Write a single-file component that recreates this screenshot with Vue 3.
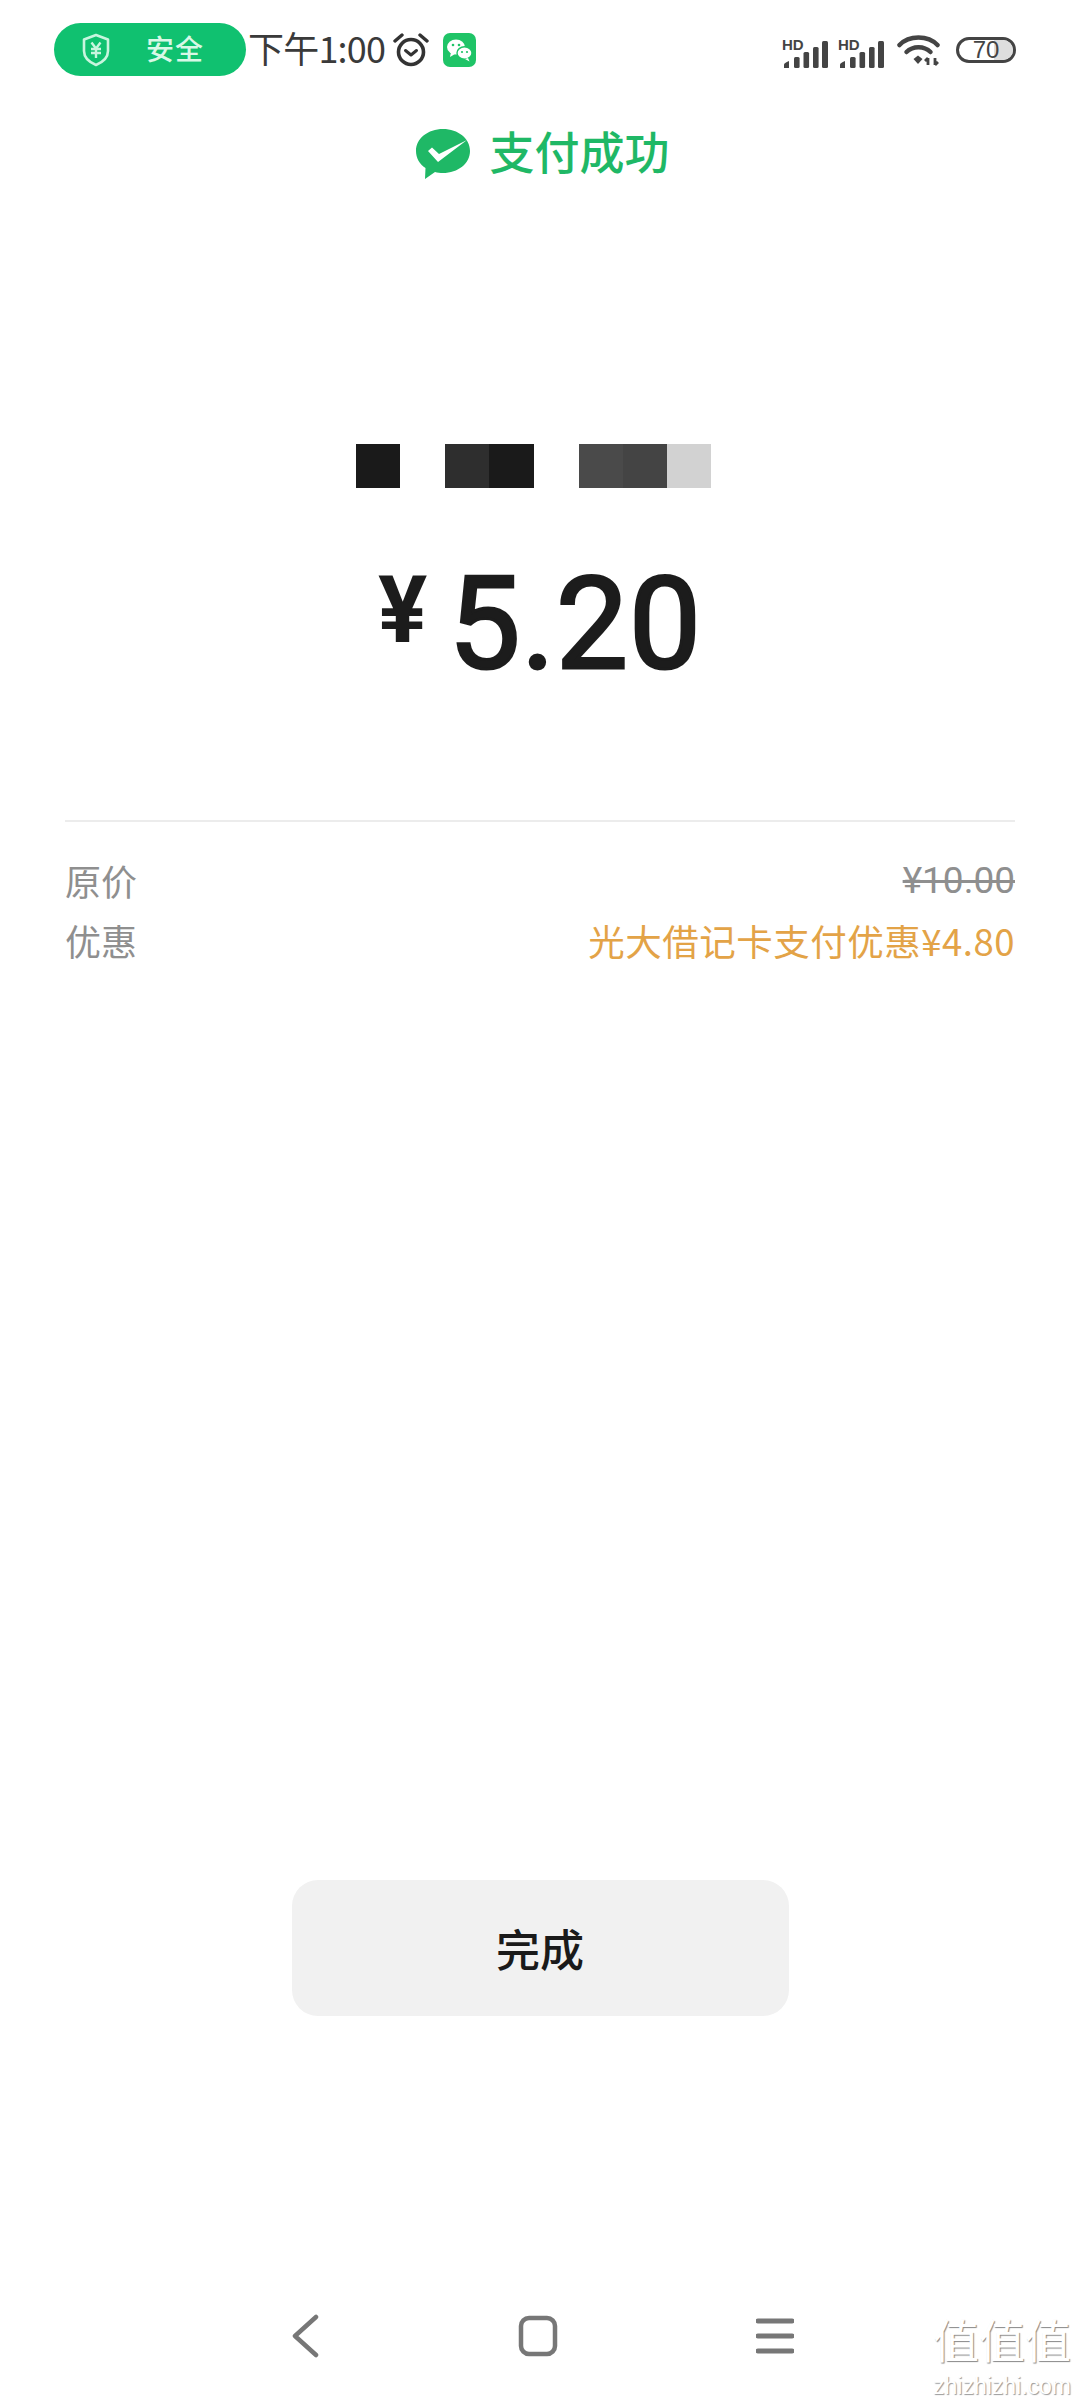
<template>
	<div class="page">
		<div class="status-bar">
			<div class="safe-pill">
				<svg class="shield" width="30" height="34" viewBox="0 0 30 34">
					<path d="M15 2 L27 6.5 V18 C27 25 21 29.5 15 32 C9 29.5 3 25 3 18 V6.5 Z" fill="none" stroke="#c8f5de" stroke-width="2.6" stroke-linejoin="round" />
					<path d="M10.5 9.5 L15 15.5 L19.5 9.5 M10 16 H20 M10 20 H20 M15 15.5 V25" fill="none" stroke="#c8f5de" stroke-width="2.4" />
				</svg>
				<span class="safe-text">安全</span>
			</div>
			<span class="time">下午1:00</span>
			<svg class="alarm" width="36" height="36" viewBox="0 0 36 36">
				<circle cx="18" cy="20" r="12.5" fill="none" stroke="#333" stroke-width="3.6" />
				<path d="M12.5 18.5 L18 23 L23.5 18.5" fill="none" stroke="#333" stroke-width="3" stroke-linecap="round" stroke-linejoin="round" />
				<path d="M2 9 L9 3 M34 9 L27 3" fill="none" stroke="#333" stroke-width="3.4" stroke-linecap="round" />
			</svg>
			<svg class="wechat" width="33" height="34" viewBox="0 0 33 34">
				<rect width="33" height="34" rx="7" fill="#1fc467" />
				<ellipse cx="13" cy="14" rx="9" ry="7.5" fill="#fff" />
				<path d="M8 19 L7 24 L12 21 Z" fill="#fff" />
				<ellipse cx="21.5" cy="20" rx="7.5" ry="6.2" stroke="#1fc467" stroke-width="1.4" fill="#fff" />
				<path d="M25 25 L26.5 28.5 L22 26 Z" fill="#fff" />
				<circle cx="10" cy="12" r="1.3" fill="#1fc467" />
				<circle cx="16" cy="12" r="1.3" fill="#1fc467" />
				<circle cx="19" cy="19" r="1.1" fill="#1fc467" />
				<circle cx="24" cy="19" r="1.1" fill="#1fc467" />
			</svg>

			<div class="status-right">
				<svg v-for="n in 2" :key="n" class="signal" width="46" height="40" viewBox="0 -8 46 40">
					<text x="0" y="12" class="hd">HD</text>
					<path d="M2 30 V26.5 Q2 25 7 23 V30 Z" fill="#444" />
					<rect x="12" y="19" width="5.6" height="11" rx="1.5" fill="#444" />
					<rect x="21.5" y="14" width="5.6" height="16" rx="1.5" fill="#444" />
					<rect x="31" y="9" width="5.6" height="21" rx="1.5" fill="#444" />
					<rect x="40" y="3" width="6" height="27" rx="1.5" fill="#444" />
				</svg>
				<svg class="wifi" width="43" height="33" viewBox="0 0 43 33">
					<path d="M2.500 12 C12 2 31 2 40.500 12" fill="none" stroke="#444" stroke-width="4.500" stroke-linecap="round" />
					<path d="M9.500 19 C16 12.500 27 12.500 33.500 19" fill="none" stroke="#444" stroke-width="4.500" stroke-linecap="round" />
					<path d="M16.500 26 L21 22.500 L25.500 26 L21 31 Z" fill="#444" />
					<path d="M31 32 V25 M28 28 L31 25 M38 25 V32 M38 32 L41 29" fill="none" stroke="#444" stroke-width="2.800" />
				</svg>
				<div class="battery">
					<div class="battery-rest"></div>
					<span class="battery-num">70</span>
				</div>
			</div>
		</div>

		<div class="title-row">
			<svg class="pay-icon" width="56" height="52" viewBox="0 0 56 52">
				<path d="M28 1 C43 1 55 10.500 55 23 C55 35.500 43 45 28 45 C25 45 22.500 44.700 20 44 L10 51 L10.500 40 C4.500 36 1 30 1 23 C1 10.500 13 1 28 1 Z" fill="#1fb866" />
				<path d="M13 23 L17 19.500 L24 26 L52 12 L23 34 Z" fill="#fff" />
			</svg>
			<span class="title-text">支付成功</span>
		</div>

		<div class="payee">
			<div v-for="(group, i) in payeeBlocks" :key="i" class="payee-group">
				<div
					v-for="(color, j) in group"
					:key="j"
					class="payee-cell"
					:style="{ background: color }"
				></div>
			</div>
		</div>

		<div class="amount">
			<span class="yen">¥</span>
			<span class="value">5.20</span>
		</div>

		<div class="details">
			<div class="detail-row">
				<span class="detail-label">原价</span>
				<span class="detail-old">¥10.00</span>
			</div>
			<div class="detail-row">
				<span class="detail-label">优惠</span>
				<span class="detail-discount">光大借记卡支付优惠¥4.80</span>
			</div>
		</div>

		<button class="done-button">完成</button>

		<div class="nav-bar">
			<svg width="30" height="44" viewBox="0 0 30 44">
				<path d="M26 3 L5 22 L26 41" fill="none" stroke="#777" stroke-width="4.500" stroke-linecap="round" stroke-linejoin="round" />
			</svg>
			<svg width="40" height="42" viewBox="0 0 40 42">
				<rect x="3" y="3" width="34" height="36" rx="8" fill="none" stroke="#777" stroke-width="4.500" />
			</svg>
			<svg width="38" height="38" viewBox="0 0 38 38">
				<path d="M2 4 H36 M2 19 H36 M2 34 H36" fill="none" stroke="#777" stroke-width="5" stroke-linecap="round" />
			</svg>
		</div>

		<div class="watermark">
			<div class="watermark-logo">值值值</div>
			<div class="watermark-site">zhizhizhi.com</div>
		</div>
	</div>
</template>

<script setup>
const payeeBlocks = [
	["#1a1a1a"],
	["#2e2e2e", "#1a1a1a"],
	["#4a4a4a", "#444444", "#d2d2d2"],
];
</script>

<style>
html,
body {
	background: #fff;
}
</style>

<style scoped>
.page {
	position: relative;
	display: flex;
	flex-direction: column;
	height: 2400px;
	overflow: hidden;
	background: #fff;
	font-family: "Noto Sans CJK SC", "Noto Sans", sans-serif;
}

.status-bar {
	display: flex;
	align-items: center;
	height: 53px;
	margin-top: 23px;
	padding: 0 64px 0 54px;
}

.safe-pill {
	display: flex;
	align-items: center;
	width: 192px;
	height: 53px;
	padding-left: 27px;
	box-sizing: border-box;
	border-radius: 27px;
	background: #10c170;
}

.safe-text {
	margin: 0 0 3px 35px;
	font-size: 28px;
	font-weight: 500;
	letter-spacing: 1px;
	color: #d8f8e6;
}

.time {
	margin: 0 0 5px 2px;
	font-size: 36px;
	letter-spacing: -0.8px;
	color: #3a3a3a;
	white-space: nowrap;
}

.alarm {
	margin-left: 8px;
}

.wechat {
	margin-left: 14px;
}

.status-right {
	display: flex;
	align-items: center;
	margin-left: auto;
}

.signal {
	margin-right: 10px;
}

.hd {
	font-family: "Liberation Sans", sans-serif;
	font-size: 15px;
	font-weight: 700;
	fill: #444;
}

.wifi {
	margin: 0 16px 0 3px;
}

.battery {
	position: relative;
	display: flex;
	justify-content: center;
	align-items: center;
	width: 60px;
	height: 26px;
	box-sizing: border-box;
	border: 3px solid #444;
	border-radius: 13px;
	overflow: hidden;
}

.battery-rest {
	position: absolute;
	top: 0;
	right: 0;
	bottom: 0;
	width: 19px;
	background: #dedede;
}

.battery-num {
	position: relative;
	font-family: "Liberation Sans", sans-serif;
	font-size: 24px;
	line-height: 20px;
	color: #444;
}

.title-row {
	display: flex;
	justify-content: center;
	align-items: center;
	gap: 18px;
	margin-top: 45px;
	padding-left: 5px;
}

.pay-icon {
	margin-top: 6px;
}

.title-text {
	font-size: 45px;
	font-weight: 500;
	line-height: 60px;
	color: #1fb866;
}

.payee {
	display: flex;
	justify-content: center;
	gap: 45px;
	margin-top: 263px;
	padding-right: 13px;
}

.payee-group {
	display: flex;
}

.payee-cell {
	width: 44.200px;
	height: 44px;
}

.amount {
	display: flex;
	justify-content: center;
	align-items: flex-start;
	height: 156px;
	margin-top: 58px;
	font-family: Roboto, sans-serif;
	color: #1c1c1c;
}

.yen {
	margin-top: 10px;
	margin-right: 21px;
	font-size: 92px;
	font-weight: 700;
	line-height: 110px;
}

.value {
	font-size: 128px;
	font-weight: 400;
	letter-spacing: 1px;
	line-height: 156px;
	-webkit-text-stroke: 3px #1c1c1c;
}

.details {
	margin: 118px 65px 0;
	padding-top: 28px;
	border-top: 2px solid #ececec;
}

.detail-row {
	display: flex;
	justify-content: space-between;
	align-items: center;
	height: 60px;
}

.detail-label {
	font-size: 36px;
	color: #8f8f8f;
}

.detail-old {
	font-family: Roboto, sans-serif;
	font-size: 37px;
	color: #8f8f8f;
	text-decoration: line-through;
}

.detail-discount {
	font-size: 36.500px;
	letter-spacing: 0.5px;
	color: #e3a347;
}

.done-button {
	align-self: center;
	width: 497px;
	height: 136px;
	margin-top: 910px;
	border: none;
	border-radius: 26px;
	background: #f1f1f1;
	font-family: inherit;
	font-size: 44px;
	font-weight: 500;
	color: #1a1a1a;
}

.nav-bar {
	display: flex;
	align-items: center;
	justify-content: center;
	gap: 198px;
	margin-top: 298px;
	padding-left: 4px;
}

.watermark {
	position: absolute;
	right: 9px;
	bottom: 0;
	width: 138px;
	display: flex;
	flex-direction: column;
	align-items: center;
	color: #fff;
}

.watermark-logo {
	font-size: 46px;
	line-height: 67px;
	text-shadow: 1px 1px 1px #888;
}

.watermark-site {
	font-family: "Liberation Sans", sans-serif;
	font-size: 23px;
	line-height: 28px;
	white-space: nowrap;
	text-shadow: 1px 1px 1px #999;
}
</style>
